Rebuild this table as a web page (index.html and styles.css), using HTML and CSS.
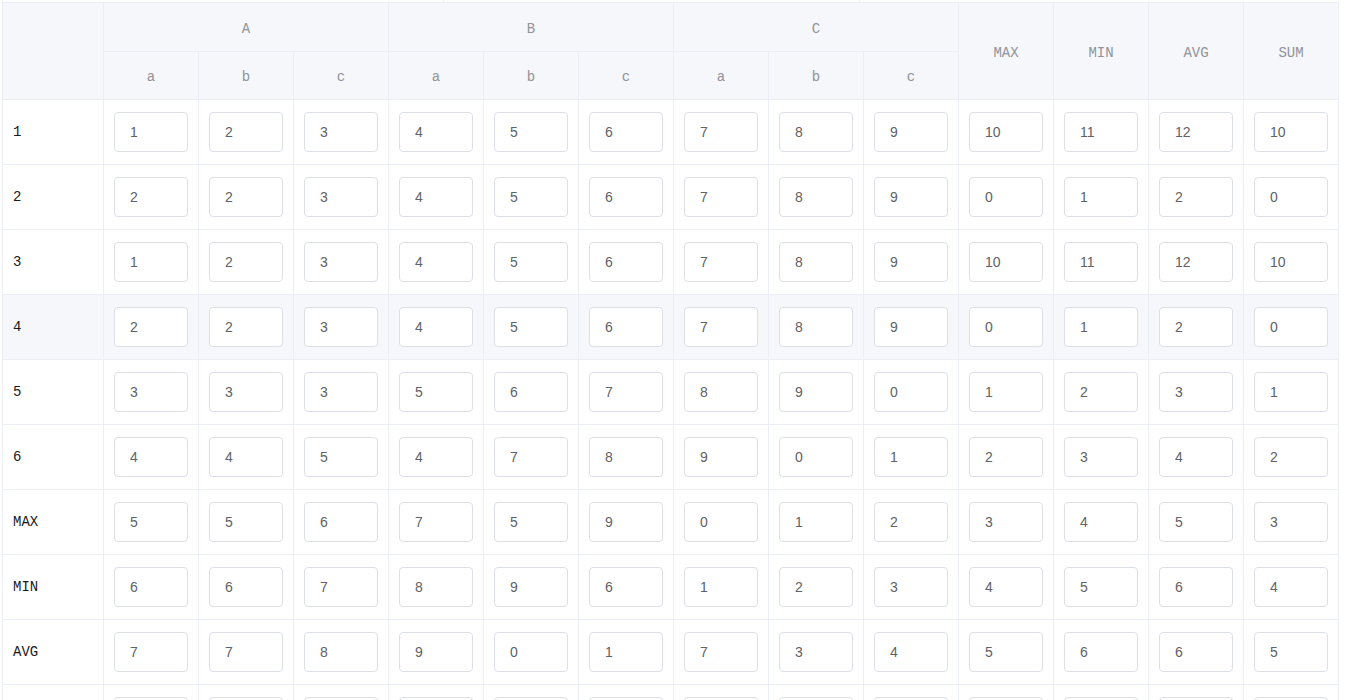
FILE: index.html
```html
<!DOCTYPE html>
<html lang="zh">
<head>
    <meta charset="UTF-8">
    <title>统计表</title>
    <link rel="stylesheet" href="styles.css">
</head>
<body>
<div class="strip"><span></span><span></span><span></span></div>
<table class="grid">
    <colgroup>
        <col class="col-label">
        <col span="13" class="col-val">
    </colgroup>
    <thead>
        <tr class="head-top">
            <th rowspan="2"></th>
            <th colspan="3">A</th>
            <th colspan="3">B</th>
            <th colspan="3">C</th>
            <th rowspan="2">MAX</th>
            <th rowspan="2">MIN</th>
            <th rowspan="2">AVG</th>
            <th rowspan="2">SUM</th>
        </tr>
        <tr>
            <th>a</th><th>b</th><th>c</th>
            <th>a</th><th>b</th><th>c</th>
            <th>a</th><th>b</th><th>c</th>
        </tr>
    </thead>
    <tbody id="rows"></tbody>
</table>

<script>
const data = [
    ["1",   [1,2,3,4,5,6,7,8,9,10,11,12,10]],
    ["2",   [2,2,3,4,5,6,7,8,9,0,1,2,0]],
    ["3",   [1,2,3,4,5,6,7,8,9,10,11,12,10]],
    ["4",   [2,2,3,4,5,6,7,8,9,0,1,2,0]],
    ["5",   [3,3,3,5,6,7,8,9,0,1,2,3,1]],
    ["6",   [4,4,5,4,7,8,9,0,1,2,3,4,2]],
    ["MAX", [5,5,6,7,5,9,0,1,2,3,4,5,3]],
    ["MIN", [6,6,7,8,9,6,1,2,3,4,5,6,4]],
    ["AVG", [7,7,8,9,0,1,7,3,4,5,6,6,5]],
    ["SUM", [8,8,9,0,1,2,8,4,5,6,7,7,6]]
];

const body = document.getElementById("rows");
data.forEach(function (row, i) {
    const tr = document.createElement("tr");
    if (i === 3) tr.className = "hover";
    let html = "<td class='label'>" + row[0] + "</td>";
    row[1].forEach(function (v) {
        html += "<td><input class='cell-input' type='text' value='" + v + "'></td>";
    });
    tr.innerHTML = html;
    body.appendChild(tr);
});
</script>
</body>
</html>
```

FILE: styles.css
```css
body {
    margin: 0;
    background: #fff;
    font-family: "Liberation Mono", monospace;
}
.strip {
    display: flex;
    height: 2px;
    margin-left: 2px;
}
.strip span {
    border-left: 1px solid #ebeef5;
}
.strip span:nth-child(1) {
    width: 440px;
}
.strip span:nth-child(2) {
    width: 415px;
}
.strip span:nth-child(3) {
    width: 0;
}
.grid {
    border-collapse: collapse;
    table-layout: fixed;
    width: 1337px;
    margin-left: 2px;
    font-size: 14px;
}
.col-label {
    width: 101px;
}
.col-val {
    width: 95px;
}
.grid th,
.grid td {
    border: 1px solid #ebeef5;
    padding: 12px 10px;
    line-height: 23px;
}
.grid th {
    background: #f5f7fa;
    color: #909399;
    font-weight: normal;
    text-align: center;
    padding: 14px 10px 10px;
}
.grid .head-top th {
    padding-top: 15px;
}
.grid td {
    color: #1a1a1a;
    text-align: left;
}
.grid tr.hover td {
    background: #f5f7fa;
}
.cell-input {
    display: block;
    box-sizing: border-box;
    width: 100%;
    height: 40px;
    padding: 0 15px;
    border: 1px solid #dcdfe6;
    border-radius: 4px;
    background: #fff;
    color: #606266;
    font-family: "Liberation Sans", Arial, sans-serif;
    font-size: 14px;
    outline: none;
}
```
